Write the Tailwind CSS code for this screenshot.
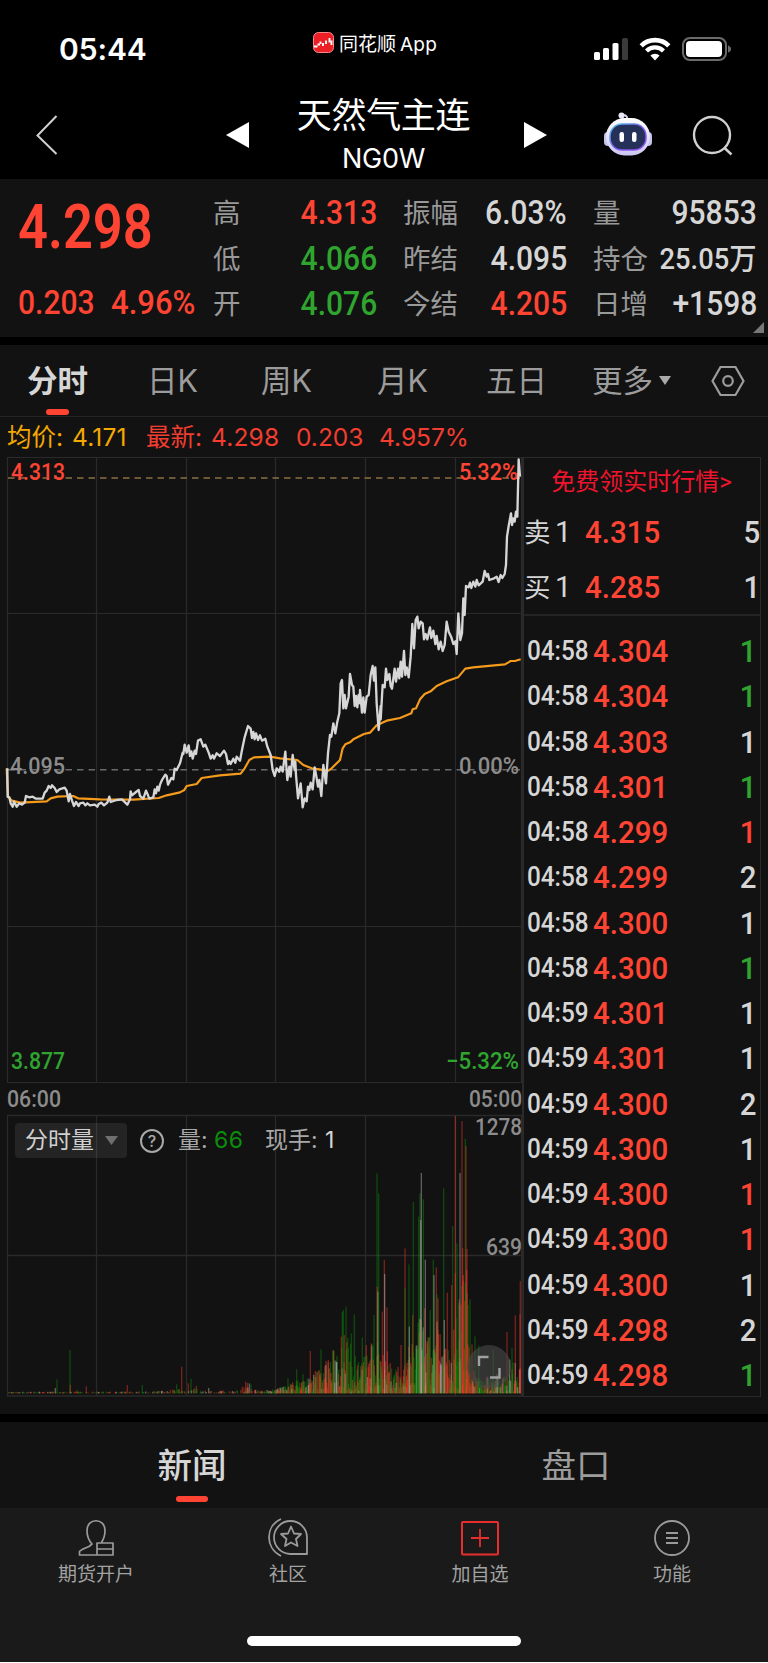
<!DOCTYPE html>
<html lang="zh-CN">
<head>
  <meta charset="UTF-8" />
  <meta name="viewport" content="width=device-width, initial-scale=1.0" />
  <title>天然气主连 NG0W</title>
  <script src="https://cdn.jsdelivr.net/npm/@tailwindcss/browser@4"></script>
</head>
<body class="bg-black text-[#d6d6d6] font-['Inter','Noto_Sans_CJK_SC',sans-serif] w-[768px] h-[1663px] overflow-hidden flex flex-col">

  <!-- Status bar -->
  <div class="h-[88px] shrink-0 flex items-start justify-between text-white pl-[59px] pr-[37px]">
    <div class="w-[254px] pt-[34px] text-[30px] leading-[30px] font-semibold tracking-[-0.1px]">05:44</div>
    <div class="flex-1 pt-[32px] flex items-start gap-[5px]">
      <svg class="w-[21px] h-[21px]" viewBox="0 0 21 21">
        <rect x=".5" y=".5" width="20" height="20" rx="5" fill="#ec1f26" stroke="#f58a8c" />
        <path d="M1 14.500H4.500M4.500 12.500H7M7.500 9.500V12M10 11V14M13 8.500V12M16.500 6V10.500M18.500 8.500V13" fill="none" stroke="#fff" stroke-width="1.900" />
      </svg>
      <span class="text-[19px] leading-[22px] pt-[2px] flex items-center gap-1"><span>同花顺</span><span class="tracking-[0.2px]">App</span></span>
    </div>
    <div class="pt-[37px] flex items-center gap-[11px]">
      <svg class="w-[34px] h-[24px]" viewBox="0 0 34 24" fill="#fff">
        <rect x="0" y="15" width="6" height="8" rx="1.6" />
        <rect x="9" y="11" width="6" height="12" rx="1.6" />
        <rect x="18.500" y="6" width="6" height="17" rx="1.600" />
        <rect x="28" y="1" width="6" height="22" rx="1.6" fill="#3a3a3a" />
      </svg>
      <svg class="w-[32px] h-[24px]" viewBox="0 0 32 24">
        <path d="M2.200 8.800a19.500 19.500 0 0 1 27.600 0" fill="none" stroke="#fff" stroke-width="4.600" />
        <path d="M7.500 14a12 12 0 0 1 17 0" fill="none" stroke="#fff" stroke-width="4.200" />
        <path d="M16 23.500l-4.600-5a6.800 6.800 0 0 1 9.200 0z" fill="#fff" />
      </svg>
      <svg class="w-[49px] h-[24px]" viewBox="0 0 49 24">
        <rect x="1" y="1" width="43" height="22" rx="7" fill="none" stroke="#6a6a6a" stroke-width="2" />
        <rect x="4" y="4" width="36" height="16" rx="4" fill="#fff" />
        <path d="M46 8.500q3 1 3 3.500t-3 3.500z" fill="#6a6a6a" />
      </svg>
    </div>
  </div>

  <!-- Title bar -->
  <div class="h-[91px] shrink-0 flex text-white pl-[35px] pr-[34px]">
    <svg class="w-[24px] h-[42px] mt-[26px]" viewBox="0 0 24 42"><path d="M21.500 2L2.500 21.500L21.500 40" fill="none" stroke="#d0d0d0" stroke-width="2" /></svg>
    <svg class="w-[23px] h-[26px] ml-[167px] mt-[34px]" viewBox="0 0 23 26"><path d="M0 13L23 0V26z" fill="#fff" /></svg>
    <div class="w-[275px] pr-[6px] flex flex-col items-center">
      <div class="mt-[7px] text-[35px] leading-[40px] tracking-[-0.3px]">天然气主连</div>
      <div class="mt-[9px] text-[27px] leading-[30px] tracking-[-0.3px]">NG0W</div>
    </div>
    <svg class="w-[23px] h-[26px] mt-[34px]" viewBox="0 0 23 26"><path d="M23 13L0 0V26z" fill="#fff" /></svg>
    <svg class="w-[48px] h-[46px] ml-[57px] mt-[24px]" viewBox="0 0 48 46">
      <defs>
        <linearGradient id="shell" x1="0" y1="0" x2="0" y2="1"><stop offset="0" stop-color="#fff" /><stop offset="1" stop-color="#c9c6f2" /></linearGradient>
        <linearGradient id="rim" x1="0" y1="0" x2="1" y2="1"><stop offset="0" stop-color="#4fd0f0" /><stop offset=".5" stop-color="#7b5cf0" /><stop offset="1" stop-color="#9a50f0" /></linearGradient>
      </defs>
      <path d="M23 9V5q-1-2-4-2" fill="none" stroke="#d8d8ea" stroke-width="1.800" />
      <circle cx="17.500" cy="3.500" r="3" fill="#e8e8f6" />
      <rect x="0" y="20" width="8" height="14" rx="4" fill="#c4c2ea" />
      <rect x="40" y="20" width="8" height="14" rx="4" fill="#c4c2ea" />
      <rect x="2" y="6" width="44" height="37.500" rx="18.500" fill="url(#shell)" />
      <rect x="6" y="12" width="36" height="26" rx="12" fill="#26315a" stroke="url(#rim)" stroke-width="1.500" />
      <rect x="15.500" y="20" width="4.500" height="10" rx="2.200" fill="#fff" />
      <rect x="28" y="20" width="4.500" height="10" rx="2.200" fill="#fff" />
    </svg>
    <svg class="w-[42px] h-[42px] ml-[40px] mt-[26px]" viewBox="0 0 42 42" fill="none" stroke="#d0d0d0" stroke-width="2.400"><circle cx="20" cy="21" r="18" /><path d="M32 33.500L39.500 40.500" /></svg>
  </div>

  <!-- Quote summary -->
  <div class="relative h-[158px] shrink-0 bg-[#121212] flex pt-[10px] pr-[11px] font-['Roboto','Noto_Sans_CJK_SC',sans-serif]">
    <div class="w-[213px] pl-[18px] text-[#ff4433]">
      <div class="text-[61px] leading-[80px] -mt-[2px] font-semibold origin-left scale-x-[0.86]">4.298</div>
      <div class="flex mt-[13px] text-[33px] leading-[46px] font-medium">
        <div class="w-[93px]"><div class="origin-left scale-x-[0.91]">0.203</div></div>
        <div class="origin-left scale-x-[0.94]">4.96%</div>
      </div>
    </div>
    <div class="flex-1 flex gap-[26px] text-[33px] leading-[45.6px] font-medium" id="quote"></div>
    <svg class="absolute right-[4px] bottom-[4px] w-[11px] h-[11px]" viewBox="0 0 11 11"><path d="M11 0V11H0z" fill="#777" /></svg>
  </div>

  <!-- Period tabs -->
  <div class="h-[72px] mt-[8px] shrink-0 bg-[#121212] border-b border-[#242424] flex items-center text-[30.500px] leading-[36px] text-[#9c9c9c] pl-[27px]">
    <div class="relative w-[120px] font-bold text-[#d6d6d6]">分时<span class="absolute left-[19px] top-[46px] w-[23px] h-[6px] rounded-[3px] bg-[#ff4433]"></span></div>
    <div class="w-[114px]">日K</div>
    <div class="w-[116px]">周K</div>
    <div class="w-[109px]">月K</div>
    <div class="w-[106px]">五日</div>
    <div class="w-[119px] flex items-center gap-[6px]">更多<svg class="w-[12px] h-[9px]" viewBox="0 0 12 9"><path d="M0 0H12L6 9z" fill="#aaa" /></svg></div>
    <svg class="w-[34px] h-[32px]" viewBox="0 0 34 32" fill="none" stroke="#9c9c9c" stroke-width="2.200"><path d="M9.500 2H24.500L32.500 16L24.500 30H9.500L1.500 16z" /><circle cx="17" cy="16" r="4.800" /></svg>
  </div>

  <!-- Average / latest price -->
  <div class="h-[40px] shrink-0 bg-[#121212] flex items-center pl-[7px] text-[24.500px] leading-[40px] text-[#f23d30]">
    <div class="w-[65px] text-[#f5a800]">均价:</div>
    <div class="w-[74px] text-[#f5a800] tracking-[0.2px]">4.171</div>
    <div class="w-[65px]">最新:</div>
    <div class="w-[85px] tracking-[0.2px]">4.298</div>
    <div class="w-[83px]">0.203</div>
    <div>4.957%</div>
  </div>

  <!-- Charts and order book -->
  <div class="h-[957px] shrink-0 bg-[#121212] flex">
    <div class="relative w-[522px] shrink-0">
      <svg class="block w-[526px] h-[957px] overflow-visible" viewBox="0 457 526 957">
        <g fill="none" stroke="#2a2a2a" stroke-width="1.200">
          <path d="M7.500 457V1082.500M96.500 457V1082.500M186.500 457V1082.500M275.500 457V1082.500M365.500 457V1082.500M455.500 457V1082.500M521.500 457V1082.500" />
          <path d="M7 457.500H523M7 613.500H523M7 926.500H523M7 1082.500H523" />
          <path d="M7.500 1115.500V1396M96.500 1115.500V1396M186.500 1115.500V1396M275.500 1115.500V1396M365.500 1115.500V1396M455.500 1115.500V1396M521.500 1115.500V1396" />
          <path d="M7 1115.500H523M7 1255.500H523M7 1396H523" stroke-width="1.600" />
        </g>
        <g fill="none" stroke-width="1.500" stroke-dasharray="6.500 5">
          <path d="M8 478H520" stroke="#8a7043" />
          <path d="M8 769.700H520" stroke="#6a6a6a" />
        </g>
        <!-- curves use a 3x finer grid -->
        <g transform="translate(0 450) scale(.33333)" fill="none" stroke-linejoin="round">
          <polyline stroke="#f59b1c" stroke-width="6.500" points="20,955 24,1040 36,1052 60,1058 140,1054 152,1045 172,1040 220,1038 234,1045 300,1048 400,1049 476,1044 500,1036 540,1027 553,1020 560,1008 590,1002 605,984 660,976 722,971 734,955 748,930 762,922 810,920 840,925 892,930 910,945 935,955 985,962 995,955 1020,930 1028,895 1036,883 1050,877 1060,868 1092,852 1110,848 1130,826 1160,812 1200,804 1234,790 1238,778 1248,775 1260,748 1274,732 1292,724 1310,708 1340,694 1374,682 1396,656 1420,652 1515,643 1532,633 1545,633 1562,628" />
          <polyline stroke="#d6d6d6" stroke-width="7" points="22,955 23,1040 28,1042 32,1060 38,1070 42,1055 50,1070 58,1060 66,1064 74,1058 78,1038 88,1042 98,1040 108,1046 128,1046 134,1028 140,1022 146,1008 152,1014 156,1006 164,1014 170,1026 178,1018 194,1013 200,1022 206,1054 210,1032 216,1052 222,1068 228,1056 236,1068 240,1060 250,1058 256,1066 262,1060 270,1066 284,1064 292,1070 296,1062 304,1058 312,1066 322,1058 328,1040 332,1056 350,1050 366,1048 376,1058 382,1064 390,1048 392,1024 396,1036 408,1026 416,1020 420,1038 430,1046 438,1022 444,1036 448,1046 460,1042 464,1018 468,1030 472,1010 476,1022 480,1004 486,990 496,974 500,978 504,1004 514,984 520,988 524,956 530,960 540,940 548,908 550,912 554,884 560,908 566,886 570,918 574,904 578,926 584,902 588,912 594,872 602,868 610,890 616,884 626,908 632,926 638,916 642,926 650,910 660,918 672,902 678,912 684,942 688,934 692,942 700,926 706,938 710,920 720,932 726,900 734,862 744,828 752,836 756,864 760,846 764,868 768,850 774,870 780,856 786,872 796,866 802,890 812,915 818,960 824,978 830,955 838,965 842,950 848,965 856,905 862,990 868,950 872,980 878,915 884,960 886,935 888,975 894,1045 902,1000 908,1072 914,1045 920,1054 924,1010 928,1020 932,998 938,1018 944,952 950,985 954,1010 958,990 964,1038 970,945 978,1000 984,910 990,855 994,860 1000,820 1006,850 1012,815 1018,790 1022,700 1026,690 1030,775 1034,735 1038,775 1046,740 1050,672 1056,705 1060,710 1064,768 1068,738 1072,772 1076,735 1080,760 1080,720 1086,788 1090,742 1094,788 1100,740 1106,735 1112,675 1118,648 1122,692 1126,652 1130,760 1136,840 1142,768 1142,808 1148,705 1154,712 1158,656 1162,690 1168,672 1172,708 1176,716 1184,656 1188,695 1194,656 1198,685 1202,635 1206,680 1212,603 1216,675 1220,652 1226,682 1232,620 1237,522 1242,595 1247,510 1252,500 1256,535 1262,515 1268,520 1272,568 1277,552 1282,568 1290,532 1294,564 1300,542 1306,582 1310,558 1316,598 1322,575 1328,603 1334,585 1340,515 1346,545 1354,562 1360,582 1366,574 1370,612 1375,490 1381,570 1386,550 1390,445 1394,495 1398,408 1406,412 1410,398 1414,414 1420,395 1426,410 1430,390 1436,406 1448,395 1454,363 1460,380 1464,372 1468,390 1480,386 1490,380 1496,396 1502,375 1507,384 1514,372 1518,345 1521,260 1526,228 1533,190 1536,225 1540,205 1544,215 1548,185 1552,200 1556,28 1560,80" />
        </g>
        <g id="volume" transform="translate(0 1100) scale(.33333)"></g>

        <g font-family="Roboto, sans-serif" font-size="23.500" font-weight="500" fill="#8c8c8c">
          <text x="11" y="479.500" textLength="54" lengthAdjust="spacingAndGlyphs" fill="#ff4433">4.313</text>
          <text x="459" y="479.500" textLength="59" lengthAdjust="spacingAndGlyphs" fill="#ff4433">5.32%</text>
          <text x="10" y="774" textLength="55" lengthAdjust="spacingAndGlyphs">4.095</text>
          <text x="459" y="774" textLength="60" lengthAdjust="spacingAndGlyphs">0.00%</text>
          <text x="11" y="1069" textLength="54" lengthAdjust="spacingAndGlyphs" fill="#2fa52f">3.877</text>
          <text x="446" y="1069" textLength="73" lengthAdjust="spacingAndGlyphs" fill="#2fa52f">−5.32%</text>
          <text x="7" y="1107" textLength="54" lengthAdjust="spacingAndGlyphs">06:00</text>
          <text x="469" y="1107" textLength="53" lengthAdjust="spacingAndGlyphs">05:00</text>
          <text x="475" y="1135" textLength="47" lengthAdjust="spacingAndGlyphs">1278</text>
          <text x="486" y="1254.500" textLength="36" lengthAdjust="spacingAndGlyphs">639</text>
        </g>
      </svg>

      <!-- Volume indicator selector -->
      <div class="absolute left-[15px] top-[666px] h-[35px] flex items-center text-[23px] leading-[37px] text-[#a8a8a8]">
        <div class="w-[112px] h-[35px] rounded-[4px] bg-[#8c8c8c]/15 text-[#d0d0d0] flex items-center pl-[10px] gap-[11px]">分时量<svg class="w-[13px] h-[9px]" viewBox="0 0 13 9"><path d="M0 0H13L6.500 9z" fill="#6f6f6f" /></svg></div>
        <div class="ml-[13px] w-[24px] h-[24px] rounded-full border-2 border-[#a8a8a8] text-[16px] leading-[20px] text-center font-medium">?</div>
        <div class="ml-[14px] w-[36px]">量:</div>
        <div class="w-[51px] text-[#0a8f0a] tracking-[0.5px]">66</div>
        <div class="w-[60px]">现手:</div>
        <div class="text-[#d6d6d6]">1</div>
      </div>
      <div class="absolute left-[467px] top-[888px] w-[44px] h-[44px] rounded-full bg-[#4a4a4a]/60 flex items-center justify-center">
        <svg class="w-[24px] h-[24px]" viewBox="0 0 24 24" fill="none" stroke="#a0a0a0" stroke-width="2.400"><path d="M2 11V2H11.500M22.500 13V22.500H13" /></svg>
      </div>
    </div>

    <div class="w-[239px] h-[940px] border border-l-2 border-[#2a2a2a] font-['Roboto','Noto_Sans_CJK_SC',sans-serif]">
      <div class="h-[47px] text-center text-[24px] leading-[48px] text-[#f0142d] pr-[1px]">免费领实时行情&gt;</div>
      <div id="depth" class="h-[111px] border-b-2 border-[#242424] text-[32px] leading-[55px] font-medium"></div>
      <div id="ticks" class="pt-[13px] text-[32px] leading-[45.250px] font-medium"></div>
    </div>
  </div>

  <!-- News / order tabs -->
  <div class="h-[86px] mt-[8px] shrink-0 bg-[#121212] flex text-[34.500px] leading-[40px]">
    <div class="w-1/2 flex flex-col items-center pt-[24px] font-medium text-[#d6d6d6]">新闻<span class="mt-[10px] w-[32px] h-[6px] rounded-[3px] bg-[#ff4433]"></span></div>
    <div class="w-1/2 flex flex-col items-center pt-[24px] text-[#9c9c9c]">盘口</div>
  </div>

  <!-- Bottom navigation -->
  <div class="relative flex-1 bg-[#1a1a1a] border-b border-white flex text-[19px] leading-[24px] text-[#a2a2a2]">
    <div class="w-1/4 flex flex-col items-center pt-[10px] gap-[5px]">
      <svg class="w-[40px] h-[40px]" viewBox="0 0 40 40" fill="none" stroke="#9a9a9a" stroke-width="1.700" stroke-linejoin="round">
        <path d="M21 37H3.500V33.500Q5 31.500 13 28.500L16 26Q11 20.500 11 12.500C11 -.500 29 -.500 29 12.500Q29 19 25.500 24.500M37 25H21V37H37zM21 31H37" />
      </svg>
      <div>期货开户</div>
    </div>
    <div class="w-1/4 flex flex-col items-center pt-[10px] gap-[5px]">
      <svg class="w-[40px] h-[40px]" viewBox="0 0 40 40" fill="none" stroke="#9a9a9a" stroke-width="1.800" stroke-linejoin="round">
        <path d="M39 36H23A16.500 16.500 0 1 1 39 19.500zM13 1C-3 8-3 30 13 38M23 8.500L26 15.500L33 16L28 21L29.500 28L23 24.500L17 28L18.500 21L13 16L20 15.500z" />
      </svg>
      <div>社区</div>
    </div>
    <div class="w-1/4 flex flex-col items-center pt-[10px] gap-[5px]">
      <svg class="w-[40px] h-[40px]" viewBox="0 0 40 40" fill="none" stroke="#e62e2e" stroke-width="2"><rect x="2" y="4" width="36" height="32.500" rx="1" /><path d="M20 11V29M11 20H29" stroke-width="1.800" /></svg>
      <div>加自选</div>
    </div>
    <div class="w-1/4 flex flex-col items-center pt-[10px] gap-[5px]">
      <svg class="w-[40px] h-[40px]" viewBox="0 0 40 40" fill="none" stroke="#9a9a9a" stroke-width="1.800"><circle cx="20" cy="20" r="17" /><path d="M14 15H26M14 20H26M14 25H26" /></svg>
      <div>功能</div>
    </div>
    <div class="absolute left-[247px] bottom-[16px] w-[274px] h-[10px] rounded-full bg-white"></div>
  </div>

  <script>
    const RED = 'text-[#ff4433]', GREEN = 'text-[#2fa52f]', WHITE = 'text-[#d6d6d6]';

    const quote = [
      [['高', '4.313', RED], ['低', '4.066', GREEN], ['开', '4.076', GREEN]],
      [['振幅', '6.03%', WHITE], ['昨结', '4.095', WHITE], ['今结', '4.205', RED]],
      [['量', '95853', WHITE], ['持仓', '25.05万', WHITE], ['日增', '+1598', WHITE]]
    ];
    document.getElementById('quote').innerHTML = quote.map(col => `
      <div class="flex-1">
        ${col.map(([label, value, color]) => `
          <div class="flex justify-between h-[45.6px] whitespace-nowrap">
            <span class="text-[27.500px] font-normal text-[#999] pt-[2px]">${label}</span>
            <span class="${color} ${value.includes('万') ? 'text-[30px]' : ''} pt-[1px] origin-right scale-x-[0.91]">${value}</span>
          </div>`).join('')}
      </div>`).join('');

    const depth = [['卖', '4.315', 5], ['买', '4.285', 1]];
    document.getElementById('depth').innerHTML = depth.map(([side, price, qty]) => `
      <div class="flex">
        <span class="w-[31px] text-[26.500px] font-normal">${side}</span>
        <span class="w-[30px] text-[29px] font-normal">1</span>
        <span class="flex-1 ${RED} origin-left scale-x-[0.92]">${price}</span>
        <span class="w-[18px] text-center origin-right scale-x-[0.92]">${qty}</span>
      </div>`).join('');

    const ticks = [
      ['04:58', '4.304', 1, GREEN], ['04:58', '4.304', 1, GREEN], ['04:58', '4.303', 1, WHITE],
      ['04:58', '4.301', 1, GREEN], ['04:58', '4.299', 1, RED], ['04:58', '4.299', 2, WHITE],
      ['04:58', '4.300', 1, WHITE], ['04:58', '4.300', 1, GREEN], ['04:59', '4.301', 1, WHITE],
      ['04:59', '4.301', 1, WHITE], ['04:59', '4.300', 2, WHITE], ['04:59', '4.300', 1, WHITE],
      ['04:59', '4.300', 1, RED], ['04:59', '4.300', 1, RED], ['04:59', '4.300', 1, WHITE],
      ['04:59', '4.298', 2, WHITE], ['04:59', '4.298', 1, GREEN]
    ];
    document.getElementById('ticks').innerHTML = ticks.map(([time, price, qty, color]) => `
      <div class="flex h-[45.25px] pl-[3px]">
        <span class="w-[66px] text-[27px] origin-left scale-x-[0.9]">${time}</span>
        <span class="flex-1 ${RED} origin-left scale-x-[0.92]">${price}</span>
        <span class="w-[18px] mr-[3px] origin-center scale-x-[0.92] ${color}">${qty}</span>
      </div>`).join('');

    // Volume: [x, top, colour], baseline at 880
    const spikes = [
      [166, 864, 'w'], [171, 838, 'g'], [210, 750, 'g'], [211, 855, 'r'], [231, 869, 'g'], [259, 859, 'r'], [382, 855, 'r'],
      [427, 855, 'g'], [530, 853, 'g'], [545, 800, 'r'], [565, 850, 'r'], [573, 837, 'g'], [589, 858, 'r'], [626, 864, 'w'],
      [727, 860, 'r'], [732, 862, 'r'], [737, 845, 'r'], [742, 849, 'r'], [748, 850, 'w'], [753, 853, 'g'],
      [864, 835, 'g'], [890, 808, 'g'], [909, 822, 'g'], [931, 753, 'r'], [946, 813, 'r'], [963, 748, 'g'], [978, 783, 'r'],
      [985, 780, 'r'], [1001, 750, 'r'], [1010, 786, 'w'], [1024, 710, 'r'], [1027, 636, 'g'], [1030, 630, 'g'], [1033, 705, 'r'],
      [1038, 620, 'g'], [1054, 700, 'g'], [1063, 643, 'g'], [1087, 712, 'g'], [1099, 735, 'r'], [1114, 730, 'r'], [1122, 645, 'g'],
      [1131, 220, 'g'], [1132, 560, 'r'], [1134, 575, 'w'], [1136, 280, 'g'], [1147, 635, 'r'], [1153, 480, 'r'], [1154, 522, 'w'],
      [1161, 622, 'r'], [1203, 735, 'r'], [1215, 445, 'r'], [1215, 565, 'g'], [1227, 493, 'g'], [1228, 680, 'w'], [1238, 645, 'r'],
      [1240, 306, 'g'], [1256, 350, 'g'], [1260, 280, 'g'], [1262, 360, 'w'], [1264, 219, 'w'], [1270, 298, 'g'], [1274, 625, 'r'],
      [1276, 479, 'w'], [1291, 630, 'g'], [1300, 479, 'g'], [1302, 525, 'w'], [1309, 502, 'r'], [1311, 583, 'g'], [1314, 595, 'r'],
      [1331, 265, 'g'], [1333, 660, 'w'], [1342, 578, 'r'], [1355, 555, 'r'], [1358, 378, 'g'], [1366, 48, 'r'], [1366, 520, 'r'],
      [1371, 430, 'g'], [1378, 598, 'r'], [1380, 219, 'w'], [1386, 63, 'r'], [1388, 445, 'r'], [1390, 525, 'r'], [1396, 116, 'g'],
      [1398, 138, 'r'], [1400, 510, 'r'], [1401, 447, 'r'], [1410, 598, 'g'], [1416, 733, 'r'], [1425, 709, 'g'], [1436, 737, 'g'],
      [1480, 750, 'g'], [1521, 696, 'r'], [1536, 743, 'g'], [1546, 646, 'r'], [1560, 643, 'r'], [1561, 543, 'r']
    ];
    // Height of the dense small bars along x
    const envelope = [
      [20, 3], [450, 4], [540, 12], [600, 14], [640, 6], [720, 8], [750, 32], [775, 6], [830, 14], [880, 35], [930, 50], [980, 100], [1020, 175],
      [1040, 175], [1080, 100], [1130, 170], [1160, 150], [1180, 70], [1210, 90], [1240, 190], [1260, 230], [1290, 160],
      [1310, 240], [1325, 140], [1350, 170], [1385, 340], [1402, 340], [1408, 80], [1450, 50], [1500, 60], [1530, 110], [1562, 110]
    ];
    const fills = { r: '#ff3a2c', g: '#0a930a', w: '#c8c8c8' };
    let seed = 7;
    const rand = () => (seed = (seed * 16807) % 2147483647) / 2147483647;
    const heightAt = x => {
      const i = Math.max(1, envelope.findIndex(p => p[0] >= x));
      const [x0, h0] = envelope[i - 1], [x1, h1] = envelope[i];
      return h0 + (h1 - h0) * (x - x0) / (x1 - x0);
    };
    let bars = '';
    for (let x = 22; x < 1560; x += 1.4) {
      const r = rand();
      const h = 2 + heightAt(x) * Math.pow(rand(), 1.2);
      const c = r < 0.44 ? 'r' : r < 0.88 ? 'g' : 'w';
      if (x < 800 && rand() < 0.6) continue;
      bars += `<rect x="${x.toFixed(1)}" y="${(880 - h).toFixed(1)}" width="4" height="${h.toFixed(1)}" fill="${fills[c]}" opacity="0.45" />`;
    }
    spikes.forEach(([x, y, c]) => {
      bars += `<rect x="${x - 2}" y="${y}" width="4" height="${880 - y}" fill="${fills[c]}" opacity="0.42" />`;
    });
    document.getElementById('volume').innerHTML = bars;
  </script>
</body>
</html>
